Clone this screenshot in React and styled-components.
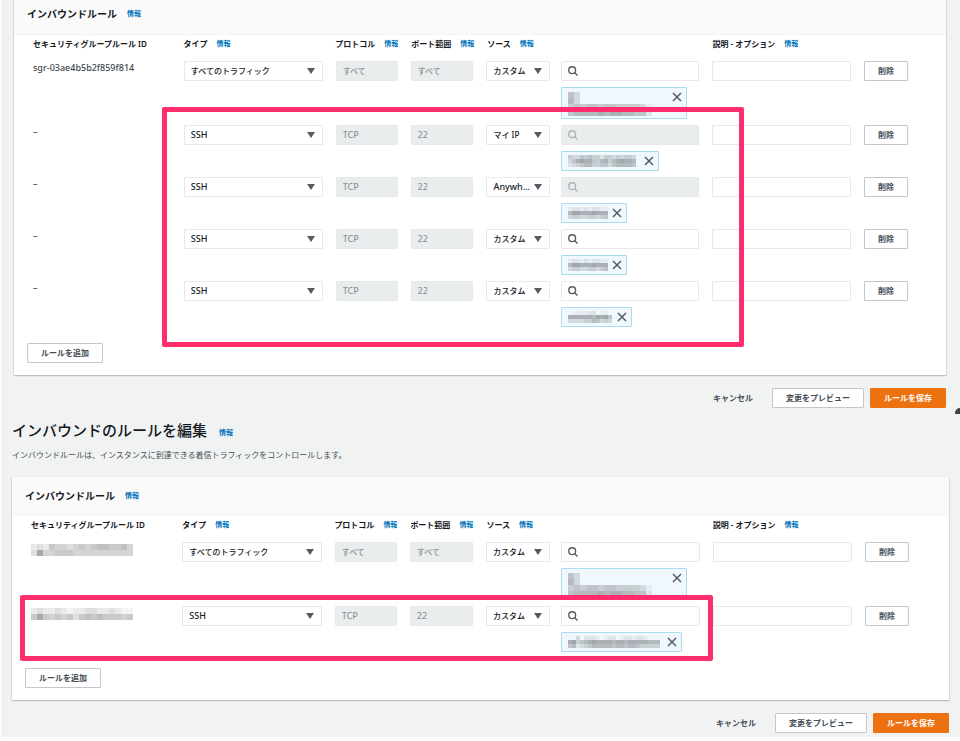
import styled, { createGlobalStyle } from "styled-components";

const GlobalStyle = createGlobalStyle`
  * {
    box-sizing: border-box;
  }
  body {
    margin: 0;
    background: #fff;
    color: #16191f;
    font-family: "Noto Sans", "Noto Sans CJK JP", sans-serif;
    font-size: 8px;
    line-height: 12px;
  }
  button,
  input,
  select {
    margin: 0;
    font: inherit;
  }
`;

const Page = styled.div`
  position: relative;
  margin-left: 1px;
  background: #f1f3f3;
`;

const Screen = styled.section`
  padding: 0 ${(p) => (p.$wide ? 11 : 14)}px 0 ${(p) => (p.$wide ? 11 : 13)}px;
`;

const Panel = styled.div`
  position: relative;
  background: #fff;
  box-shadow: 0 1px 1px #b9c0c6, 1px 1px 1px #dde0e2, -1px 0 1px #dde0e2;
`;

const PanelHeader = styled.header`
  display: flex;
  align-items: center;
  gap: 10px;
  height: ${(p) => (p.$cut ? 35 : 39)}px;
  padding: 0 13px ${(p) => (p.$cut ? 6 : 0)}px;
  background: #fafafa;
  border-bottom: 1px solid #f4f5f5;
`;

const PanelTitle = styled.h2`
  margin: 0;
  font-size: 10px;
  font-weight: 600;
`;

const InfoLink = styled.a`
  flex: none;
  color: #0073bb;
  font-size: 7px;
  font-weight: 700;
  text-decoration: none;
  white-space: nowrap;
`;

const Table = styled.table`
  display: block;
  padding: 0 ${(p) => (p.$cut ? 38 : 40)}px 0 19px;
`;

const TableHead = styled.thead`
  display: block;
`;

const TableBody = styled.tbody`
  display: grid;
  gap: 6px;
`;

const TableRow = styled.tr`
  display: grid;
  grid-template-columns: 138fr 139fr 62fr 63fr 213fr 139fr 44fr;
  column-gap: 13px;
  align-items: start;
`;

const HeadCell = styled.th`
  display: flex;
  align-items: center;
  gap: 9px;
  height: 26px;
  padding: 0 0 8px;
  white-space: nowrap;
  text-align: left;
  font-weight: 600;
`;

const Cell = styled.td`
  min-width: 0;
  padding: 0;
`;

const RuleId = styled.div`
  height: 16px;
  padding-top: ${(p) => (p.$masked ? 2 : 0)}px;
  color: #414750;
  font-size: 9px;
  font-weight: 500;
  line-height: 14px;
`;

const SelectBox = styled.span`
  position: relative;
  display: block;
  flex: none;
  width: ${(p) => p.$width || "100%"};
  &::after {
    content: "";
    position: absolute;
    top: 7px;
    right: 8px;
    border: 4px solid transparent;
    border-top: 6px solid #545b64;
    border-bottom: 0;
    pointer-events: none;
  }
`;

const Select = styled.select`
  display: block;
  appearance: none;
  width: 100%;
  height: 20px;
  padding: 0 16px 0 6px;
  border: 1px solid #e6eaea;
  border-radius: 1px;
  background: #fff;
  color: #16191f;
  font-size: ${(p) => (p.$latin ? 9 : 8)}px;
  font-weight: 500;
`;

const TextInput = styled.input`
  display: block;
  width: 100%;
  height: 20px;
  padding: 0 6px 2px;
  border: 1px solid #e6eaea;
  border-radius: 1px;
  background: #fff;
  font-size: ${(p) => (p.$latin ? 9 : 8)}px;
  font-weight: 500;
  &:disabled {
    background: #eaeded;
    color: #879596;
  }
`;

const Source = styled.div`
  display: flex;
  gap: 11px;
`;

const SourceTarget = styled.div`
  flex: 1;
  min-width: 0;
`;

const SearchBox = styled.label`
  display: flex;
  align-items: center;
  height: 20px;
  padding: 0 6px;
  border: 1px solid #e6eaea;
  border-radius: 1px;
  background: ${(p) => (p.$disabled ? "#eaeded" : "#fff")};
  color: ${(p) => (p.$disabled ? "#aab7b8" : "#545b64")};
`;

const SearchInput = styled.input`
  flex: 1;
  min-width: 0;
  border: 0;
  padding: 0 4px;
  background: transparent;
  outline: 0;
`;

const Tag = styled.div`
  display: flex;
  justify-content: space-between;
  align-items: ${(p) => (p.$tall ? "flex-start" : "center")};
  width: ${(p) => p.$width}px;
  max-width: 100%;
  height: ${(p) => (p.$tall ? 32 : 20)}px;
  margin-top: 6px;
  padding: ${(p) => (p.$tall ? 4 : 0)}px 4px 0 6px;
  border: 1px solid #a9dcee;
  border-radius: 1px;
  background: #f0f8fd;
`;

const TagRemove = styled.button`
  display: flex;
  padding: 0;
  border: 0;
  background: none;
  color: #545b64;
`;

const Button = styled.button`
  height: 20px;
  padding: 0 13px;
  border: 1px solid ${(p) => (p.$primary ? "#ec7211" : "#c4c8cc")};
  border-radius: 1px;
  background: ${(p) => (p.$primary ? "#ec7211" : "#fff")};
  color: ${(p) => (p.$primary ? "#fff" : "#444c56")};
  font-weight: 700;
  white-space: nowrap;
`;

const DeleteButton = styled(Button)`
  display: block;
  width: 100%;
  padding: 0;
`;

const LinkButton = styled(Button)`
  border: 0;
  background: none;
`;

const PanelFooter = styled.footer`
  padding: 16px 13px 12px;
`;

const Actions = styled.div`
  display: flex;
  justify-content: flex-end;
  gap: 6px;
  padding: 13px 0 4px;
`;

const Heading = styled.div`
  display: flex;
  align-items: center;
  gap: 12px;
  padding-top: 7px;
  ${InfoLink} {
    margin-top: 6px;
  }
`;

const Title = styled.h1`
  margin: 0;
  font-size: 15px;
  font-weight: 500;
  line-height: 22px;
`;

const Description = styled.p`
  margin: 0;
  padding: 8px 0 16px;
  color: #444c56;
`;

// marker frame drawn over the rules being discussed
const Highlight = styled.div`
  position: absolute;
  top: ${(p) => p.$inset[0]}px;
  right: ${(p) => p.$inset[1]}px;
  bottom: ${(p) => p.$inset[2]}px;
  left: ${(p) => p.$inset[3]}px;
  border: 5px solid #ff2d6b;
  border-radius: 2px;
  pointer-events: none;
`;

const Corner = styled.span`
  position: absolute;
  top: 408px;
  right: 0;
  width: 5px;
  height: 6px;
  border-top-left-radius: 5px;
  background: #444;
`;

// each hex digit is the darkness of one square
const Mosaic = ({ rows, size = 5 }) => (
  <svg
    width={rows[0].length * size}
    height={rows.length * size}
    shapeRendering="crispEdges"
    display="block"
    aria-hidden="true"
  >
    {rows.map((row, y) =>
      [...row].map((c, x) => (
        <rect
          key={`${x}-${y}`}
          x={x * size}
          y={y * size}
          width={size}
          height={size}
          fill="#505458"
          fillOpacity={parseInt(c, 16) / 16}
        />
      ))
    )}
  </svg>
);

const SearchIcon = () => (
  <svg width="10" height="10" viewBox="0 0 10 10" fill="none" stroke="currentColor" strokeWidth="1.4">
    <circle cx="4.2" cy="4.2" r="3.4" />
    <path d="M6.7 6.7 9.5 9.5" />
  </svg>
);

const CloseIcon = () => (
  <svg width="10" height="10" viewBox="0 0 10 10" fill="none" stroke="currentColor" strokeWidth="1.5">
    <path d="M1 1 9 9M9 1 1 9" />
  </svg>
);

const allTag = {
  width: 126,
  tall: true,
  size: 6,
  rows: ["53000000000000", "63000000000000", "45455455444431", "56666767766552"],
};
const shortTag = ["1221212211", "6887778777", "3443344345"];

const topRules = [
  { id: "sgr-03ae4b5b2f859f814", type: "すべてのトラフィック", all: true, source: "カスタム", tag: allTag },
  {
    id: "–",
    type: "SSH",
    source: "マイ IP",
    locked: true,
    tag: { width: 98, size: 4, rows: ["43354544244343443", "35787754674678776", "23456644553566665"] },
  },
  { id: "–", type: "SSH", source: "Anywh...", locked: true, tag: { width: 66, size: 4, rows: shortTag } },
  { id: "–", type: "SSH", source: "カスタム", tag: { width: 66, size: 4, rows: shortTag } },
  {
    id: "–",
    type: "SSH",
    source: "カスタム",
    tag: { width: 71, size: 4, rows: ["01111220110", "77777768785", "33334465343"] },
  },
];

const bottomRules = [
  {
    mask: ["23254434545665564", "38445554444444444"],
    type: "すべてのトラフィック",
    all: true,
    source: "カスタム",
    tag: allTag,
  },
  {
    mask: ["23223212233223211", "58545453565655545"],
    type: "SSH",
    source: "カスタム",
    tag: {
      width: 121,
      size: 4,
      rows: ["00302221012201221221000", "78456787777677677777666", "56234566666566566544444"],
    },
  },
];

const Info = () => <InfoLink href="#info">情報</InfoLink>;

const columns = [
  ["セキュリティグループルール ID", false],
  ["タイプ", true],
  ["プロトコル", true],
  ["ポート範囲", true],
  ["ソース", true],
  ["説明 - オプション", true],
  ["", false],
];

const Rule = ({ rule }) => {
  const { tag } = rule;
  return (
    <TableRow>
      <Cell>
        <RuleId $masked={!!rule.mask}>{rule.mask ? <Mosaic rows={rule.mask} size={6} /> : rule.id}</RuleId>
      </Cell>
      <Cell>
        <SelectBox>
          <Select aria-label="タイプ" $latin={!rule.all}>
            <option>{rule.type}</option>
          </Select>
        </SelectBox>
      </Cell>
      <Cell>
        <TextInput aria-label="プロトコル" disabled $latin={!rule.all} defaultValue={rule.all ? "すべて" : "TCP"} />
      </Cell>
      <Cell>
        <TextInput aria-label="ポート範囲" disabled $latin={!rule.all} defaultValue={rule.all ? "すべて" : "22"} />
      </Cell>
      <Cell>
        <Source>
          <SelectBox $width="30%">
            <Select aria-label="ソース" $latin={rule.source.startsWith("A")}>
              <option>{rule.source}</option>
            </Select>
          </SelectBox>
          <SourceTarget>
            <SearchBox $disabled={rule.locked}>
              <SearchIcon />
              <SearchInput aria-label="ソースを検索" disabled={rule.locked} />
            </SearchBox>
            <Tag $width={tag.width} $tall={tag.tall}>
              <Mosaic rows={tag.rows} size={tag.size} />
              <TagRemove aria-label="削除">
                <CloseIcon />
              </TagRemove>
            </Tag>
          </SourceTarget>
        </Source>
      </Cell>
      <Cell>
        <TextInput aria-label="説明" />
      </Cell>
      <Cell>
        <DeleteButton>削除</DeleteButton>
      </Cell>
    </TableRow>
  );
};

const RulesPanel = ({ rules, cut, inset }) => (
  <Panel>
    <PanelHeader $cut={cut}>
      <PanelTitle>インバウンドルール</PanelTitle>
      <Info />
    </PanelHeader>
    <Table $cut={cut}>
      <TableHead>
        <TableRow>
          {columns.map(([label, info]) => (
            <HeadCell key={label}>
              {label}
              {info && <Info />}
            </HeadCell>
          ))}
        </TableRow>
      </TableHead>
      <TableBody>
        {rules.map((rule, i) => (
          <Rule key={i} rule={rule} />
        ))}
      </TableBody>
    </Table>
    <PanelFooter>
      <Button>ルールを追加</Button>
    </PanelFooter>
    <Highlight $inset={inset} />
  </Panel>
);

const FormActions = () => (
  <Actions>
    <LinkButton>キャンセル</LinkButton>
    <Button>変更をプレビュー</Button>
    <Button $primary>ルールを保存</Button>
  </Actions>
);

export default function App() {
  return (
    <>
      <GlobalStyle />
      <Page>
        <Screen>
          <RulesPanel rules={topRules} cut inset={[107, 202, 28, 148]} />
          <FormActions />
        </Screen>
        <Screen $wide>
          <Heading>
            <Title>インバウンドのルールを編集</Title>
            <Info />
          </Heading>
          <Description>
            インバウンドルールは、インスタンスに到達できる着信トラフィックをコントロールします。
          </Description>
          <RulesPanel rules={bottomRules} inset={[118, 236, 39, 8]} />
          <FormActions />
        </Screen>
        <Corner />
      </Page>
    </>
  );
}
